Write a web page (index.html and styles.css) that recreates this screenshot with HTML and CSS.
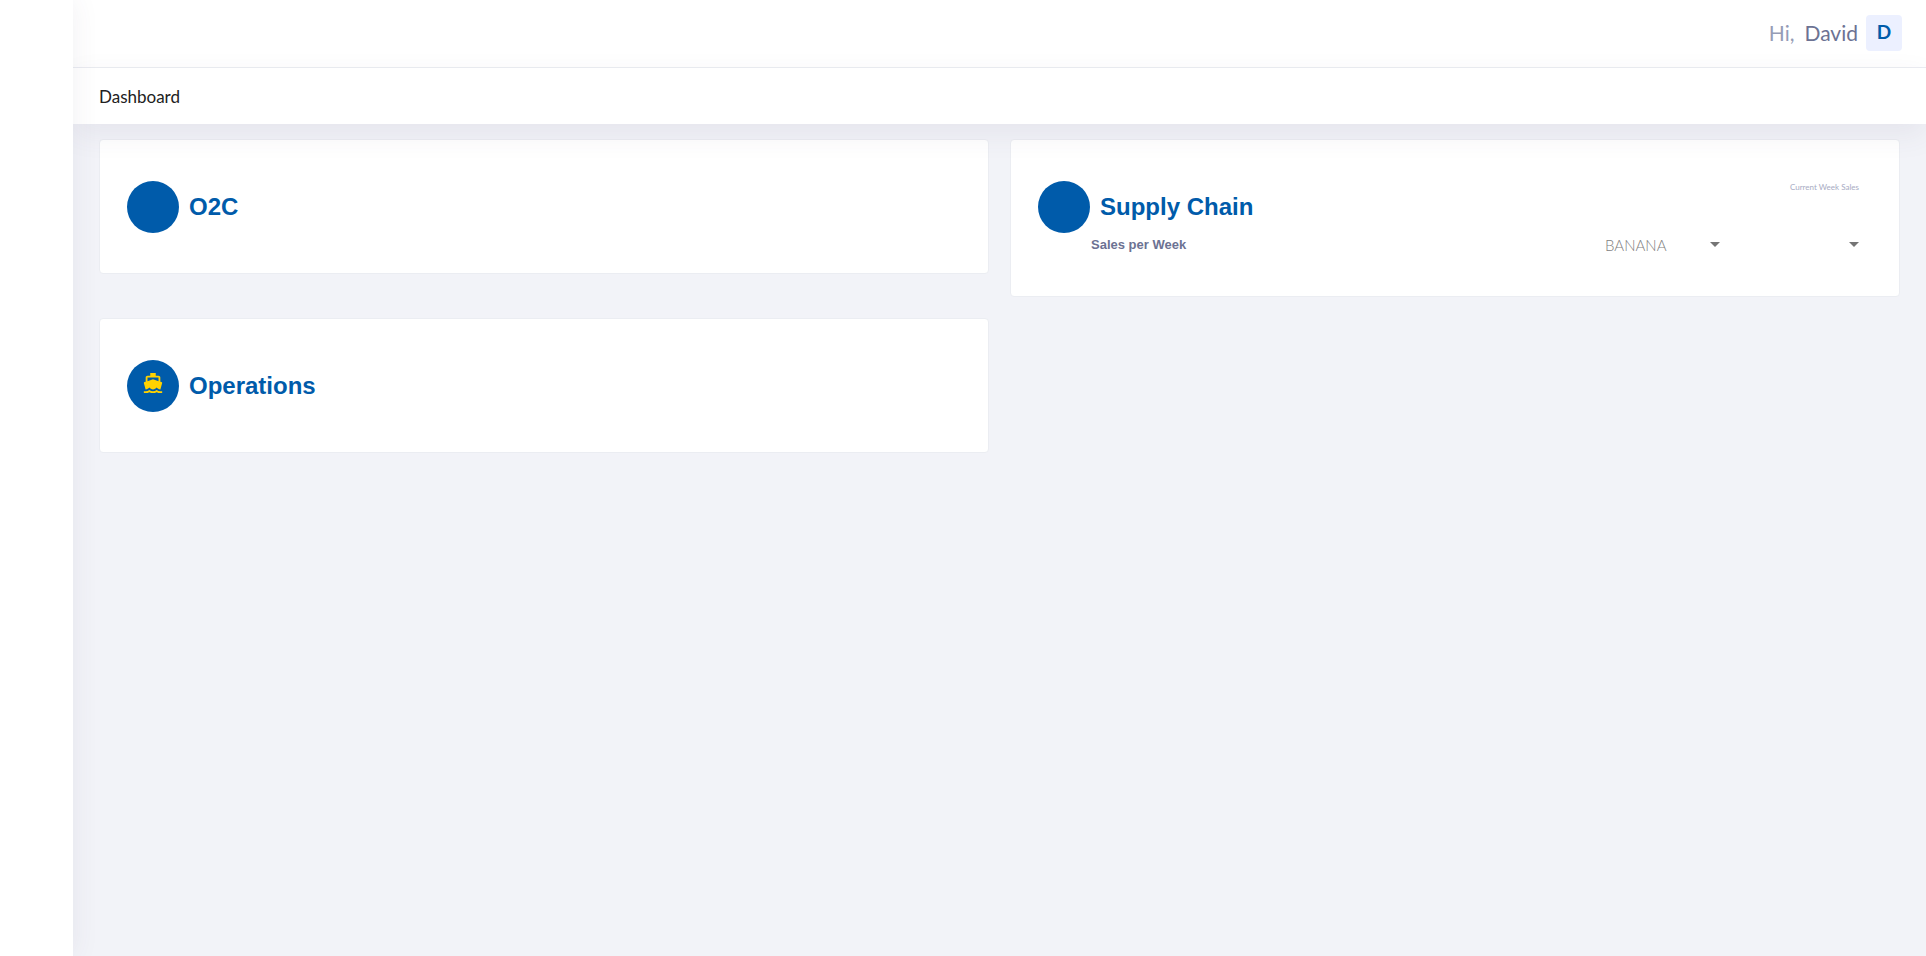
FILE: index.html
```
<!DOCTYPE html>
<html lang="en">
<head>
<meta charset="utf-8">
<title>Dashboard</title>
<link rel="stylesheet" href="styles.css">
</head>
<body>
<div class="app">
  <aside class="sidebar"></aside>
  <div class="page">
    <header class="header">
      <button class="user" type="button">
        <span class="user-hi">Hi,</span>
        <span class="user-name">David</span>
        <span class="avatar">D</span>
      </button>
    </header>
    <nav class="subheader"><a class="crumb" href="#">Dashboard</a></nav>
    <main class="grid">
      <section class="card">
        <div class="card-head">
          <span class="badge"></span>
          <h2 class="title">O2C</h2>
        </div>
      </section>
      <section class="card">
        <div class="card-head">
          <span class="badge"></span>
          <h2 class="title">Supply Chain</h2>
          <span class="note">Current Week Sales</span>
        </div>
        <div class="filters">
          <h3 class="subtitle">Sales per Week</h3>
          <div class="picker">
            <select class="picker-input" aria-label="Product"><option>BANANA</option></select>
            <svg class="caret" viewBox="0 0 10 5" aria-hidden="true"><path d="M0 0h10L5 5z"/></svg>
          </div>
          <div class="picker">
            <select class="picker-input" aria-label="Week"><option></option></select>
            <svg class="caret" viewBox="0 0 10 5" aria-hidden="true"><path d="M0 0h10L5 5z"/></svg>
          </div>
        </div>
      </section>
      <section class="card">
        <div class="card-head">
          <span class="badge">
            <svg class="boat" viewBox="0 0 24 24" aria-hidden="true"><path d="M20 21c-1.39 0-2.78-.47-4-1.32-2.44 1.71-5.56 1.71-8 0C6.78 20.53 5.39 21 4 21H2v2h2c1.38 0 2.74-.35 4-.99 2.52 1.29 5.48 1.29 8 0 1.26.65 2.62.99 4 .99h2v-2h-2zM3.95 19H4c1.6 0 3.02-.88 4-2 .98 1.12 2.4 2 4 2s3.02-.88 4-2c.98 1.12 2.4 2 4 2h.05l1.89-6.68c.08-.26.06-.54-.06-.78s-.34-.42-.6-.5L20 10.620V6c0-1.100-.9-2-2-2h-3V1H9v3H6c-1.100 0-2 .9-2 2v4.620l-1.290.42c-.26.08-.48.26-.6.500s-.15.520-.06.780L3.950 19zM6 6h12v3.970L12 8 6 9.970V6z"/></svg>
          </span>
          <h2 class="title">Operations</h2>
        </div>
      </section>
    </main>
  </div>
</div>
</body>
</html>
```
FILE: styles.css
```
* { box-sizing: border-box; }
body {
  margin: 0;
  background: #f2f3f8;
  font-family: Lato, "Liberation Sans", sans-serif;
}
.app { display: flex; min-height: 100vh; }
.sidebar {
  position: relative;
  z-index: 3;
  flex: none;
  width: 73px;
  background: #fff;
  box-shadow: 0 0 28px rgba(82, 63, 105, .08);
}
.page { flex: 1; min-width: 0; }
.header {
  display: flex;
  align-items: center;
  justify-content: flex-end;
  height: 68px;
  padding: 0 24px 2px 0;
  background: #fff;
  border-bottom: 1px solid #ebedf2;
}
.user {
  display: flex;
  align-items: center;
  padding: 0;
  border: 0;
  background: none;
  font: 21px/36px Lato, sans-serif;
  cursor: pointer;
}
.user-hi { margin-right: 10px; color: #959cb6; }
.user-name { margin-right: 8px; color: #6c7293; }
.avatar {
  width: 36px;
  height: 36px;
  border-radius: 4px;
  background: #ecf0ff;
  color: #005baa;
  font-size: 19px;
  font-weight: 700;
  line-height: 34px;
  text-align: center;
}
.subheader {
  position: relative;
  z-index: 2;
  display: flex;
  align-items: center;
  height: 56px;
  padding: 0 26px;
  background: #fff;
  box-shadow: 0 10px 30px rgba(82, 63, 105, .08);
}
.crumb { color: #212121; font-size: 17px; text-decoration: none; }
.grid {
  display: grid;
  grid-template-columns: repeat(2, minmax(0, 1fr));
  align-items: start;
  gap: 21px;
  padding: 15px 26px;
}
.card {
  padding: 41px 40px 40px 27px;
  background: #fff;
  border: 1px solid #ebedf2;
  border-radius: 4px;
}
.card-head { display: flex; align-items: center; gap: 10px; }
.badge {
  display: flex;
  flex: none;
  justify-content: center;
  width: 52px;
  height: 52px;
  padding-top: 12px;
  border-radius: 50%;
  background: #005baa;
}
.boat { width: 22px; height: 22px; fill: #ffd200; }
.title {
  margin: 0;
  color: #005baa;
  font: 700 24px/32px "Liberation Sans", sans-serif;
}
.note {
  align-self: flex-start;
  margin-left: auto;
  color: #a7abc3;
  font-size: 8px;
  line-height: 12px;
}
.filters { display: flex; align-items: center; height: 23px; padding-left: 53px; }
.subtitle {
  margin: 0 auto 0 0;
  color: #6c7293;
  font: 700 13px/20px "Liberation Sans", sans-serif;
}
.picker { position: relative; width: 115px; margin-left: 24px; }
.picker-input {
  display: block;
  width: 100%;
  padding: 0;
  border: 0;
  background: none;
  color: #808080;
  font: 300 15px/22px Lato, sans-serif;
  appearance: none;
}
.caret {
  position: absolute;
  top: 8px;
  right: 0;
  width: 10px;
  height: 5px;
  fill: #757575;
  pointer-events: none;
}
```
